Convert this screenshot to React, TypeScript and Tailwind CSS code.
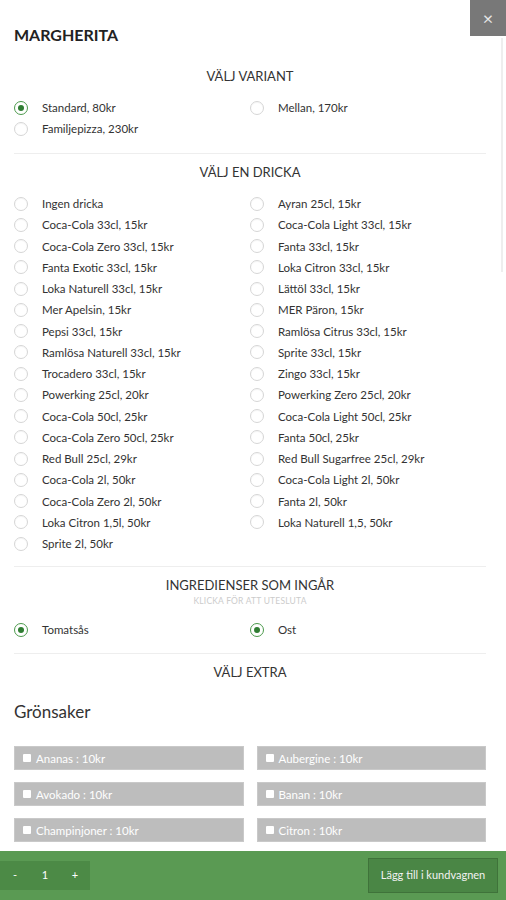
import React from "react";

const variants: [string, boolean][] = [
  ["Standard, 80kr", true],
  ["Mellan, 170kr", false],
  ["Familjepizza, 230kr", false],
];

const drinks = [
  "Ingen dricka", "Ayran 25cl, 15kr",
  "Coca-Cola 33cl, 15kr", "Coca-Cola Light 33cl, 15kr",
  "Coca-Cola Zero 33cl, 15kr", "Fanta 33cl, 15kr",
  "Fanta Exotic 33cl, 15kr", "Loka Citron 33cl, 15kr",
  "Loka Naturell 33cl, 15kr", "Lättöl 33cl, 15kr",
  "Mer Apelsin, 15kr", "MER Päron, 15kr",
  "Pepsi 33cl, 15kr", "Ramlösa Citrus 33cl, 15kr",
  "Ramlösa Naturell 33cl, 15kr", "Sprite 33cl, 15kr",
  "Trocadero 33cl, 15kr", "Zingo 33cl, 15kr",
  "Powerking 25cl, 20kr", "Powerking Zero 25cl, 20kr",
  "Coca-Cola 50cl, 25kr", "Coca-Cola Light 50cl, 25kr",
  "Coca-Cola Zero 50cl, 25kr", "Fanta 50cl, 25kr",
  "Red Bull 25cl, 29kr", "Red Bull Sugarfree 25cl, 29kr",
  "Coca-Cola 2l, 50kr", "Coca-Cola Light 2l, 50kr",
  "Coca-Cola Zero 2l, 50kr", "Fanta 2l, 50kr",
  "Loka Citron 1,5l, 50kr", "Loka Naturell 1,5, 50kr",
  "Sprite 2l, 50kr",
];

const extras = [
  "Ananas : 10kr", "Aubergine : 10kr",
  "Avokado : 10kr", "Banan : 10kr",
  "Champinjoner : 10kr", "Citron : 10kr",
];

function Radio({ checked }: { checked: boolean }) {
  return checked ? (
    <span className="flex h-[14px] w-[14px] shrink-0 items-center justify-center rounded-full border-[1.5px] border-[#4c9a4c] bg-white">
      <span className="h-[6px] w-[6px] rounded-full bg-[#2f7d32]" />
    </span>
  ) : (
    <span className="h-[14px] w-[14px] shrink-0 rounded-full border border-[#d6d6d6] bg-white shadow-[inset_0_1px_1px_rgba(0,0,0,0.04)]" />
  );
}

function Row({ label, checked, h }: { label: string; checked: boolean; h: string }) {
  return (
    <div className={`flex items-center gap-[14px] ${h}`}>
      <Radio checked={checked} />
      <span className="text-[11.5px] text-[#333]">{label}</span>
    </div>
  );
}

function Heading({ children, mt }: { children: React.ReactNode; mt: string }) {
  return (
    <div className={`${mt} h-[20px] text-center text-[13px] leading-[20px] text-[#333]`}>{children}</div>
  );
}

export default function App() {
  return (
    <div
      className="flex h-[900px] w-[506px] flex-col overflow-hidden bg-white"
      style={{ fontFamily: "Lato, 'Open Sans', sans-serif" }}
    >
      <div className="relative flex-1 overflow-hidden">
        <button className="absolute right-0 top-0 flex h-[36px] w-[36px] items-center justify-center bg-[#787878] text-[18px] leading-none text-[#e6e6e6]">
          ×
        </button>
        <div className="absolute right-[3px] top-[38px] h-[234px] w-[2px] bg-[#eeeeee]" />
        <div className="pl-[14px] pr-[20px]">
          <div className="mt-[25px] h-[20px] text-[16px] font-bold leading-[20px] text-[#222]">MARGHERITA</div>

          <Heading mt="mt-[21px]">VÄLJ VARIANT</Heading>
          <div className="mt-[11px] grid grid-cols-2">
            {variants.map(([l, c]) => (
              <Row key={l} label={l} checked={c} h="h-[21px]" />
            ))}
          </div>

          <div className="mt-[14px] h-px bg-[#eeeeee]" />
          <Heading mt="mt-[8px]">VÄLJ EN DRICKA</Heading>
          <div className="mt-[11px] grid grid-cols-2">
            {drinks.map((l) => (
              <Row key={l} label={l} checked={false} h="h-[21.25px]" />
            ))}
          </div>

          <div className="mt-[12px] h-px bg-[#eeeeee]" />
          <Heading mt="mt-[8px]">INGREDIENSER SOM INGÅR</Heading>
          <div className="mt-px h-[10px] text-center text-[8.5px] leading-[10px] tracking-[0.2px] text-[#cccccc]">
            KLICKA FÖR ATT UTESLUTA
          </div>
          <div className="mt-[13px] grid grid-cols-2">
            <Row label="Tomatsås" checked h="h-[21px]" />
            <Row label="Ost" checked h="h-[21px]" />
          </div>

          <div className="mt-[13px] h-px bg-[#eeeeee]" />
          <Heading mt="mt-[8px]">VÄLJ EXTRA</Heading>

          <div className="mt-[18px] h-[24px] text-[17px] leading-[24px] text-[#333]">Grönsaker</div>

          <div className="mt-[22px] grid grid-cols-2 gap-x-[13px] gap-y-[12px]">
            {extras.map((l) => (
              <div
                key={l}
                className="flex h-[24px] items-center gap-[5px] border border-[#c9c9c9] bg-[#bdbdbd] pl-[8px] text-[11.5px] text-white"
              >
                <span className="h-[8px] w-[8px] rounded-[1px] bg-white" />
                <span>{l}</span>
              </div>
            ))}
          </div>
        </div>
      </div>

      <div className="flex h-[49px] shrink-0 items-center justify-between bg-[#5a9a53] pr-[8px]">
        <div className="flex h-[29px] w-[90px] items-center bg-[#4c8a46] text-[11px] text-white">
          <span className="w-[30px] text-center">-</span>
          <span className="w-[30px] text-center">1</span>
          <span className="w-[30px] text-center">+</span>
        </div>
        <button className="h-[35px] w-[130px] border border-[#3f733a] bg-[#4a8645] text-[11px] text-[#f2f2f2]">
          Lägg till i kundvagnen
        </button>
      </div>
    </div>
  );
}
